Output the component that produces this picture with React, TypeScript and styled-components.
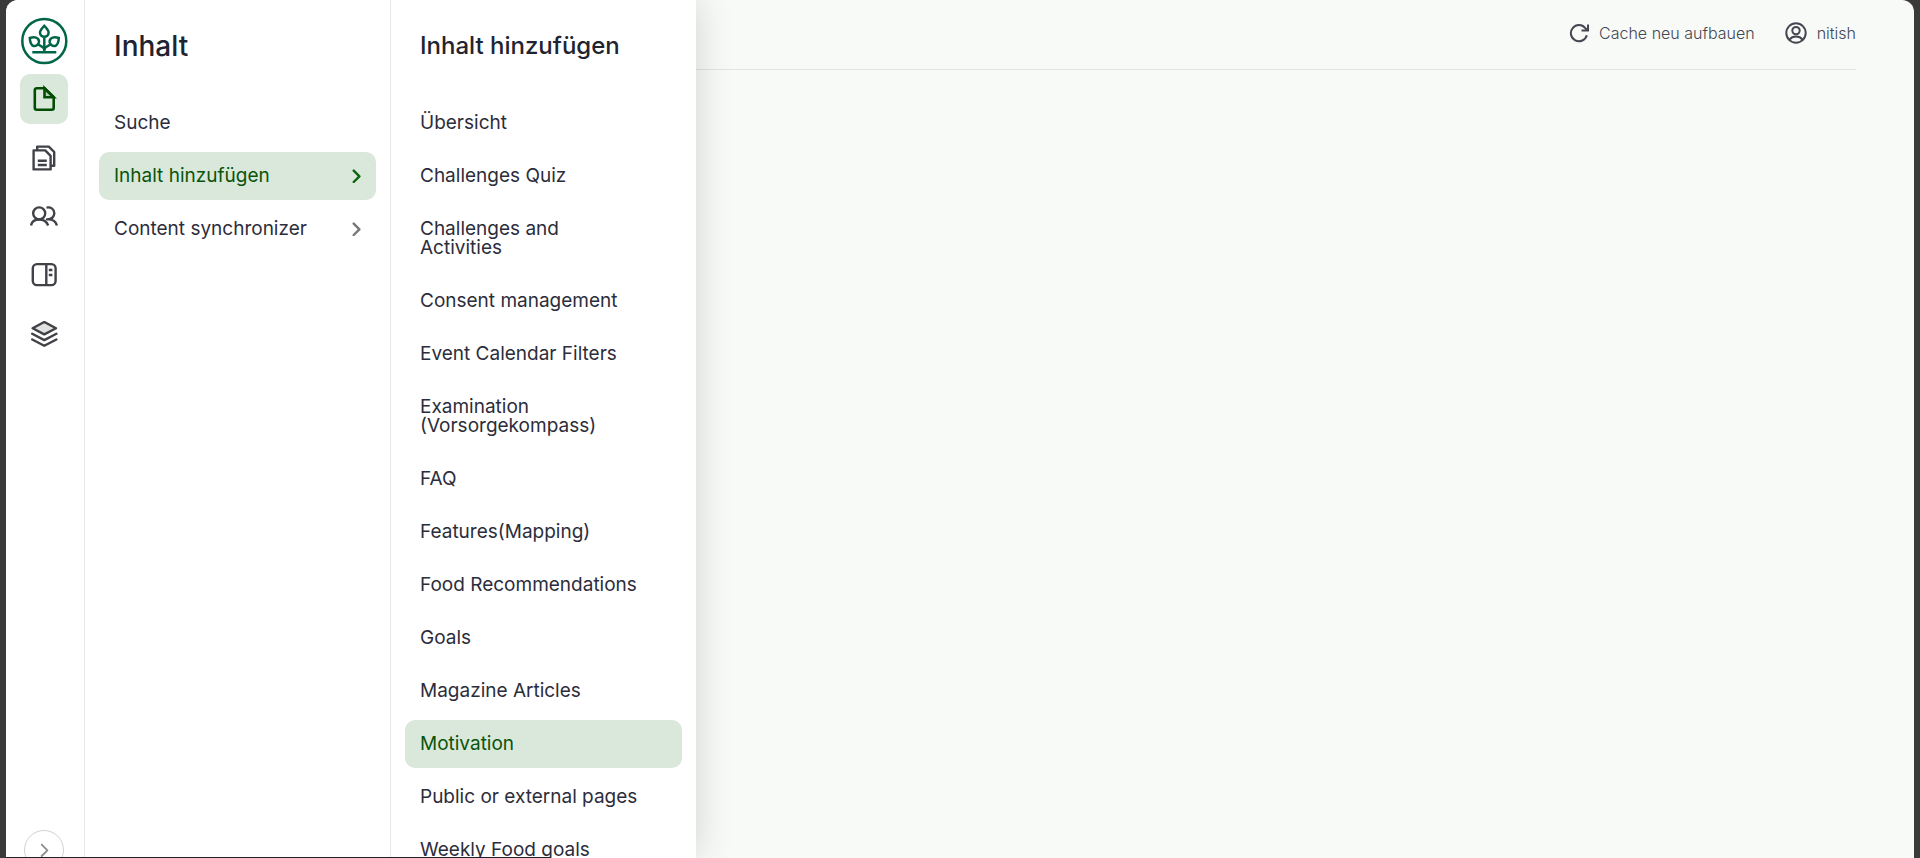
import React from 'react';
import styled, { createGlobalStyle } from 'styled-components';

const GlobalStyle = createGlobalStyle`
  *, *::before, *::after { box-sizing: border-box; }
  body {
    margin: 0;
    background: #3a3a3a;
    font-family: Inter, "Liberation Sans", sans-serif;
    color: #222330;
  }
  button { font: inherit; border: 0; padding: 0; background: none; cursor: pointer; }
  a { color: inherit; text-decoration: none; }
  ul { list-style: none; margin: 0; padding: 0; }
`;

const Frame = styled.div`
  height: 100vh;
  padding: 0 6px;
  overflow: hidden;
`;

const Shell = styled.div`
  position: relative;
  display: flex;
  height: 100%;
  overflow: hidden;
  border-radius: 12px 12px 0 0;
  background: #f8faf7;
`;

const Sidebar = styled.div`
  display: flex;
  flex: none;
  background: #fff;
  box-shadow: 0 0 36px rgba(0, 0, 0, 0.16);
  z-index: 1;
`;

const Rail = styled.nav`
  display: flex;
  flex-direction: column;
  align-items: center;
  width: 79px;
  padding: 17px 2px 0 0;
  border-right: 1px solid #e6e7e9;
`;

const LogoLink = styled.a`
  display: block;
  height: 48px;
  margin-bottom: 9px;
`;

const RailList = styled.ul`
  display: grid;
  gap: 9px;
`;

const RailButton = styled.button<{ $active?: boolean }>`
  display: grid;
  place-items: center;
  width: 48px;
  height: 50px;
  border-radius: 10px;
  color: ${(p) => (p.$active ? '#024d02' : '#414247')};
  background: ${(p) => (p.$active ? '#d9e8db' : 'transparent')};
`;

const ExpandButton = styled.button`
  display: grid;
  place-items: center;
  flex: none;
  width: 40px;
  height: 40px;
  margin: auto 0 -12px;
  border: 1px solid #d0d1d3;
  border-radius: 50%;
  background: #fff;
  color: #8c8d90;
`;

const Panel = styled.nav`
  padding: 0 14px;
  overflow: hidden;

  &:not(:last-child) { border-right: 1px solid #e6e7e9; }
`;

const PanelTitle = styled.h2<{ $large?: boolean }>`
  display: flex;
  align-items: center;
  height: 92px;
  margin: 0 0 7px;
  padding: 0 15px;
  font-size: ${(p) => (p.$large ? '28px' : '24px')};
  font-weight: 500;
  line-height: 32px;
`;

const Menu = styled.ul`
  display: grid;
  gap: 5px;
  width: 277px;
`;

const MenuLink = styled.a<{ $active?: boolean }>`
  display: flex;
  align-items: center;
  justify-content: space-between;
  min-height: 48px;
  padding: 14px 15px 15px;
  border-radius: 10px;
  font-size: 19px;
  line-height: 19px;
  color: ${(p) => (p.$active ? '#0a540a' : '#2c2d3b')};
  background: ${(p) => (p.$active ? '#d9e8db' : 'transparent')};
`;

const MenuText = styled.span`
  max-width: 220px;
`;

const Main = styled.main`
  flex: 1;
  padding-right: 58px;
`;

const Header = styled.header`
  display: flex;
  align-items: center;
  justify-content: flex-end;
  gap: 30px;
  height: 70px;
  padding-bottom: 3px;
  border-bottom: 1px solid #e1e4e1;
`;

const HeaderLink = styled.a`
  display: flex;
  align-items: center;
  gap: 10px;
  font-size: 16px;
  font-weight: 300;
  line-height: 20px;
  color: #454652;
`;

const StatusEdge = styled.div`
  position: absolute;
  left: 0;
  bottom: 0;
  width: 545px;
  height: 1px;
  background: #202024;
  z-index: 2;
`;

const stroke = {
  fill: 'none',
  stroke: 'currentColor',
  strokeWidth: 2.4,
  strokeLinecap: 'round' as const,
  strokeLinejoin: 'round' as const,
};

const Logo = () => (
  <svg width="48" height="48" viewBox="0 0 48 48" fill="none" stroke="#006647" strokeWidth="2.500" aria-hidden="true">
    <circle cx="24.300" cy="24" r="22" />
    <path d="M24.300 19.500V35M12.300 35.200h24M24.300 8.800c3 3 4.300 4.800 4.300 6.700a4.300 4.300 0 0 1-8.600 0c0-1.900 1.300-3.700 4.300-6.700z" />
    <path d="M9.800 21c3.800-1.200 6.200-.9 8 .6a4.400 4.400 0 0 1-5.500 6.700c-1.700-1.500-2.300-3.700-2.500-7.300z" />
    <path d="M38.800 21c-3.800-1.200-6.200-.9-8 .6a4.400 4.400 0 0 0 5.500 6.700c1.700-1.500 2.300-3.700 2.500-7.300z" />
    <path d="M18.600 27.500c1.500 2 5.700 1.500 5.700 5.500M30 27.500c-1.500 2-5.700 1.500-5.700 5.500" />
  </svg>
);

const FileIcon = () => (
  <svg width="28" height="28" viewBox="0 0 28 28" {...stroke} strokeWidth={2.6} aria-hidden="true">
    <path d="M14.500 3.200H6.800a2 2 0 0 0-2 2v17.600a2 2 0 0 0 2 2h14.900a2 2 0 0 0 2-2V12.200z" />
    <path d="M14.500 3.200v9h9.200z" fill="currentColor" fillOpacity="0.15" strokeLinejoin="miter" />
  </svg>
);

const FilesIcon = () => (
  <svg width="28" height="28" viewBox="0 0 28 28" {...stroke} strokeLinecap="butt" aria-hidden="true">
    <path d="M3.600 6.400h11.600l5.400 5.400v13.600H3.600z" />
    <path d="M7.200 6.400V2.600h11.600l5.400 5.400v13.800h-3.600" />
    <path d="M7.800 16.800h9M7.800 21h9" />
  </svg>
);

const UsersIcon = () => (
  <svg width="28" height="28" viewBox="0 1 28 28" {...stroke} strokeLinecap="butt" aria-hidden="true">
    <circle cx="9.200" cy="11.400" r="6" />
    <path d="M1 23.500c.8-3.800 4.200-6 8.200-6s7.600 2.200 9 6" />
    <path d="M16.500 5.600c4.500-.9 7.800 1.700 7.800 5.600 0 3.700-2.900 6.300-7.300 6.200 5.500-.4 8.800 1.700 9.900 6.100" />
  </svg>
);

const PanelIcon = () => (
  <svg width="28" height="28" viewBox="0 1 28 28" {...stroke} strokeLinecap="butt" aria-hidden="true">
    <rect x="2.800" y="3.100" width="22.800" height="21" rx="4.200" />
    <path d="M16.300 3v21M18.800 9h3.600M18.800 14h3.600" />
  </svg>
);

const LayersIcon = () => (
  <svg width="28" height="28" viewBox="0 2 28 28" {...stroke} aria-hidden="true">
    <path d="M14.300 3 26 9.200l-11.700 6.200L2.600 9.200z" fill="#e2e2e3" />
    <path d="M2.200 14.800l12.100 6.300 12.100-6.300M2.200 20.500l12.100 6.300 12.100-6.300" />
  </svg>
);

const Chevron = ({ width = 2.4 }: { width?: number }) => (
  <svg width="10" height="14" viewBox="0 0 10 14" {...stroke} strokeWidth={width} aria-hidden="true">
    <path d="M2.700 1.600 8.400 7.300 2.700 13" />
  </svg>
);

const RefreshIcon = () => (
  <svg width="20" height="20" viewBox="0 0 20 20" {...stroke} strokeWidth={2} strokeLinecap="butt" strokeLinejoin="miter" aria-hidden="true">
    <path d="M17.800 12.200A8.100 8.100 0 1 1 16.300 5.100L18.500 7.300" />
    <path d="M19 1.500v6h-6.500" />
  </svg>
);

const UserIcon = () => (
  <svg width="22" height="22" viewBox="0 0 22 22" {...stroke} strokeWidth={2} aria-hidden="true">
    <circle cx="11" cy="11" r="9.700" />
    <circle cx="11" cy="8.600" r="3.700" />
    <path d="M4.500 17.600c1.500-2 3.800-3 6.500-3s5 1 6.500 3" />
  </svg>
);

const railItems = [
  { label: 'Inhalt', icon: <FileIcon />, active: true },
  { label: 'Struktur', icon: <FilesIcon /> },
  { label: 'Benutzer', icon: <UsersIcon /> },
  { label: 'Layout', icon: <PanelIcon /> },
  { label: 'Module', icon: <LayersIcon /> },
];

type Item = { label: string; active?: boolean; nested?: boolean };

const contentItems: Item[] = [
  { label: 'Suche' },
  { label: 'Inhalt hinzufügen', active: true, nested: true },
  { label: 'Content synchronizer', nested: true },
];

const addItems: Item[] = [
  { label: 'Übersicht' },
  { label: 'Challenges Quiz' },
  { label: 'Challenges and Activities' },
  { label: 'Consent management' },
  { label: 'Event Calendar Filters' },
  { label: 'Examination (Vorsorgekompass)' },
  { label: 'FAQ' },
  { label: 'Features(Mapping)' },
  { label: 'Food Recommendations' },
  { label: 'Goals' },
  { label: 'Magazine Articles' },
  { label: 'Motivation', active: true },
  { label: 'Public or external pages' },
  { label: 'Weekly Food goals' },
];

const ChevronSlot = styled.span<{ $active?: boolean }>`
  display: flex;
  color: ${(p) => (p.$active ? '#0a660a' : '#77787c')};
`;

const MenuPanel = ({ title, large, items }: { title: string; large?: boolean; items: Item[] }) => (
  <Panel aria-label={title}>
    <PanelTitle $large={large}>{title}</PanelTitle>
    <Menu>
      {items.map((item) => (
        <li key={item.label}>
          <MenuLink href="#" $active={item.active}>
            <MenuText>{item.label}</MenuText>
            {item.nested && (
              <ChevronSlot $active={item.active}>
                <Chevron />
              </ChevronSlot>
            )}
          </MenuLink>
        </li>
      ))}
    </Menu>
  </Panel>
);

export default function App() {
  return (
    <Frame>
      <GlobalStyle />
      <Shell>
        <Sidebar>
          <Rail aria-label="Administration">
            <LogoLink href="#" aria-label="Start">
              <Logo />
            </LogoLink>
            <RailList>
              {railItems.map((item) => (
                <li key={item.label}>
                  <RailButton type="button" aria-label={item.label} $active={item.active}>
                    {item.icon}
                  </RailButton>
                </li>
              ))}
            </RailList>
            <ExpandButton type="button" aria-label="Seitenleiste ausklappen">
              <Chevron width={1.8} />
            </ExpandButton>
          </Rail>
          <MenuPanel title="Inhalt" large items={contentItems} />
          <MenuPanel title="Inhalt hinzufügen" items={addItems} />
        </Sidebar>
        <Main>
          <Header>
            <HeaderLink href="#">
              <RefreshIcon />
              Cache neu aufbauen
            </HeaderLink>
            <HeaderLink href="#">
              <UserIcon />
              nitish
            </HeaderLink>
          </Header>
        </Main>
        <StatusEdge />
      </Shell>
    </Frame>
  );
}
